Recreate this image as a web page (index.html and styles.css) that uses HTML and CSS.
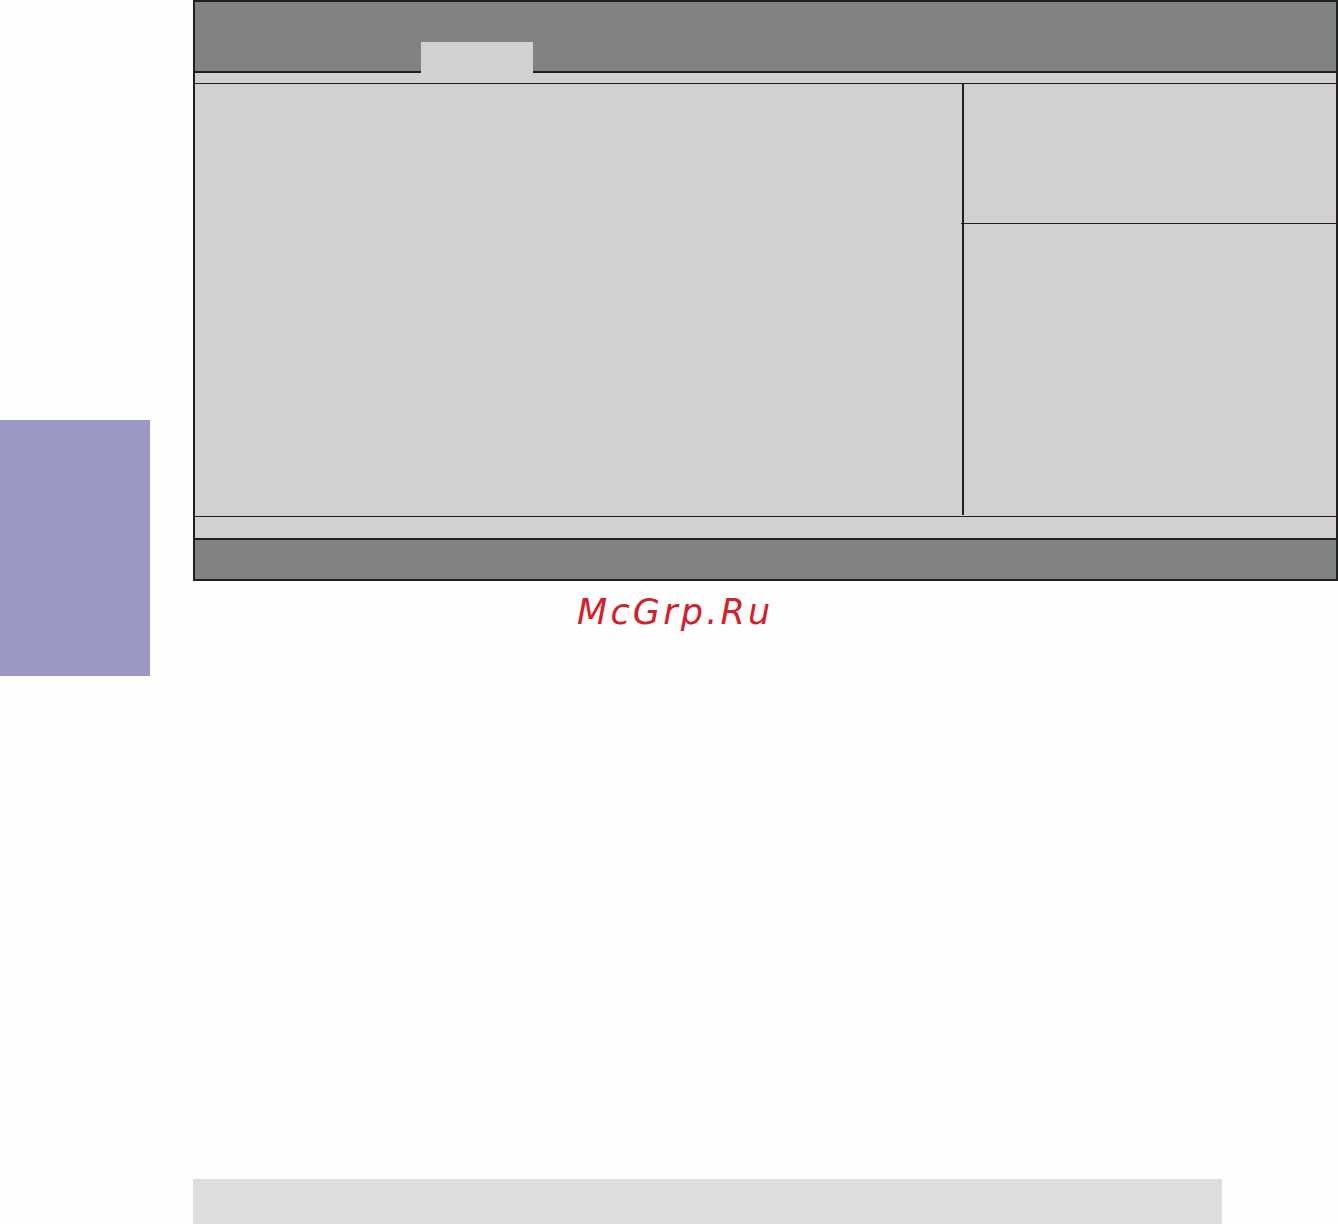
FILE: index.html
```html
<!DOCTYPE html>
<html>
<head>
<meta charset="utf-8">
<link rel="stylesheet" href="styles.css">
</head>
<body>
<div class="page">
  <div class="top">
    <div class="sidebar"></div>
    <div class="col">
      <div class="frame">
        <div class="header"><div class="tab"></div></div>
        <div class="strip"></div>
        <div class="main">
          <div class="left"></div>
          <div class="right">
            <div class="help"></div>
            <div class="keys"></div>
          </div>
        </div>
        <div class="strip2"></div>
        <div class="footer"></div>
      </div>
      <div class="watermark">McGrp.Ru</div>
    </div>
  </div>
  <div class="bottombar"></div>
</div>
</body>
</html>
```
FILE: styles.css
```css
* { box-sizing: border-box; }
html, body { margin: 0; padding: 0; background: #fefefe; overflow: hidden; }
.page { width: 1338px; height: 1224px; display: flex; flex-direction: column; }
.top { display: grid; grid-template-columns: 150px 1145px; column-gap: 43px; align-items: start; }
.sidebar { margin-top: 420px; height: 256px; background: #9b98c6; }
.col { display: flex; flex-direction: column; }
.frame { width: 1145px; border: 2px solid #231f20; background: #d1d1d3; display: flex; flex-direction: column; }
.header { height: 71px; background: #818284; border-bottom: 2px solid #231f20; display: flex; align-items: flex-end; }
.tab { margin-left: 226px; width: 112px; height: 31px; margin-bottom: -2px; background: #d1d1d3; }
.strip { height: 11px; border-bottom: 1px solid #231f20; }
.main { height: 433px; display: flex; border-bottom: 1px solid #231f20; }
.left { width: 769px; border-right: 2px solid #231f20; height: 431px; }
.right { flex: 1; display: flex; flex-direction: column; }
.help { height: 140px; border-bottom: 1px solid #231f20; margin-left: -3px; }
.keys { flex: 1; }
.strip2 { height: 23px; border-bottom: 2px solid #231f20; }
.footer { height: 39px; background: #818284; }
.watermark { margin-top: 13px; margin-left: 384px; font-family: "DejaVu Sans", sans-serif; font-style: italic; font-size: 35px; line-height: 36px; letter-spacing: 3.2px; color: #d3212a; }
.bottombar { margin-top: auto; margin-left: 193px; width: 1029px; height: 45px; background: #dcdddc; }
```
